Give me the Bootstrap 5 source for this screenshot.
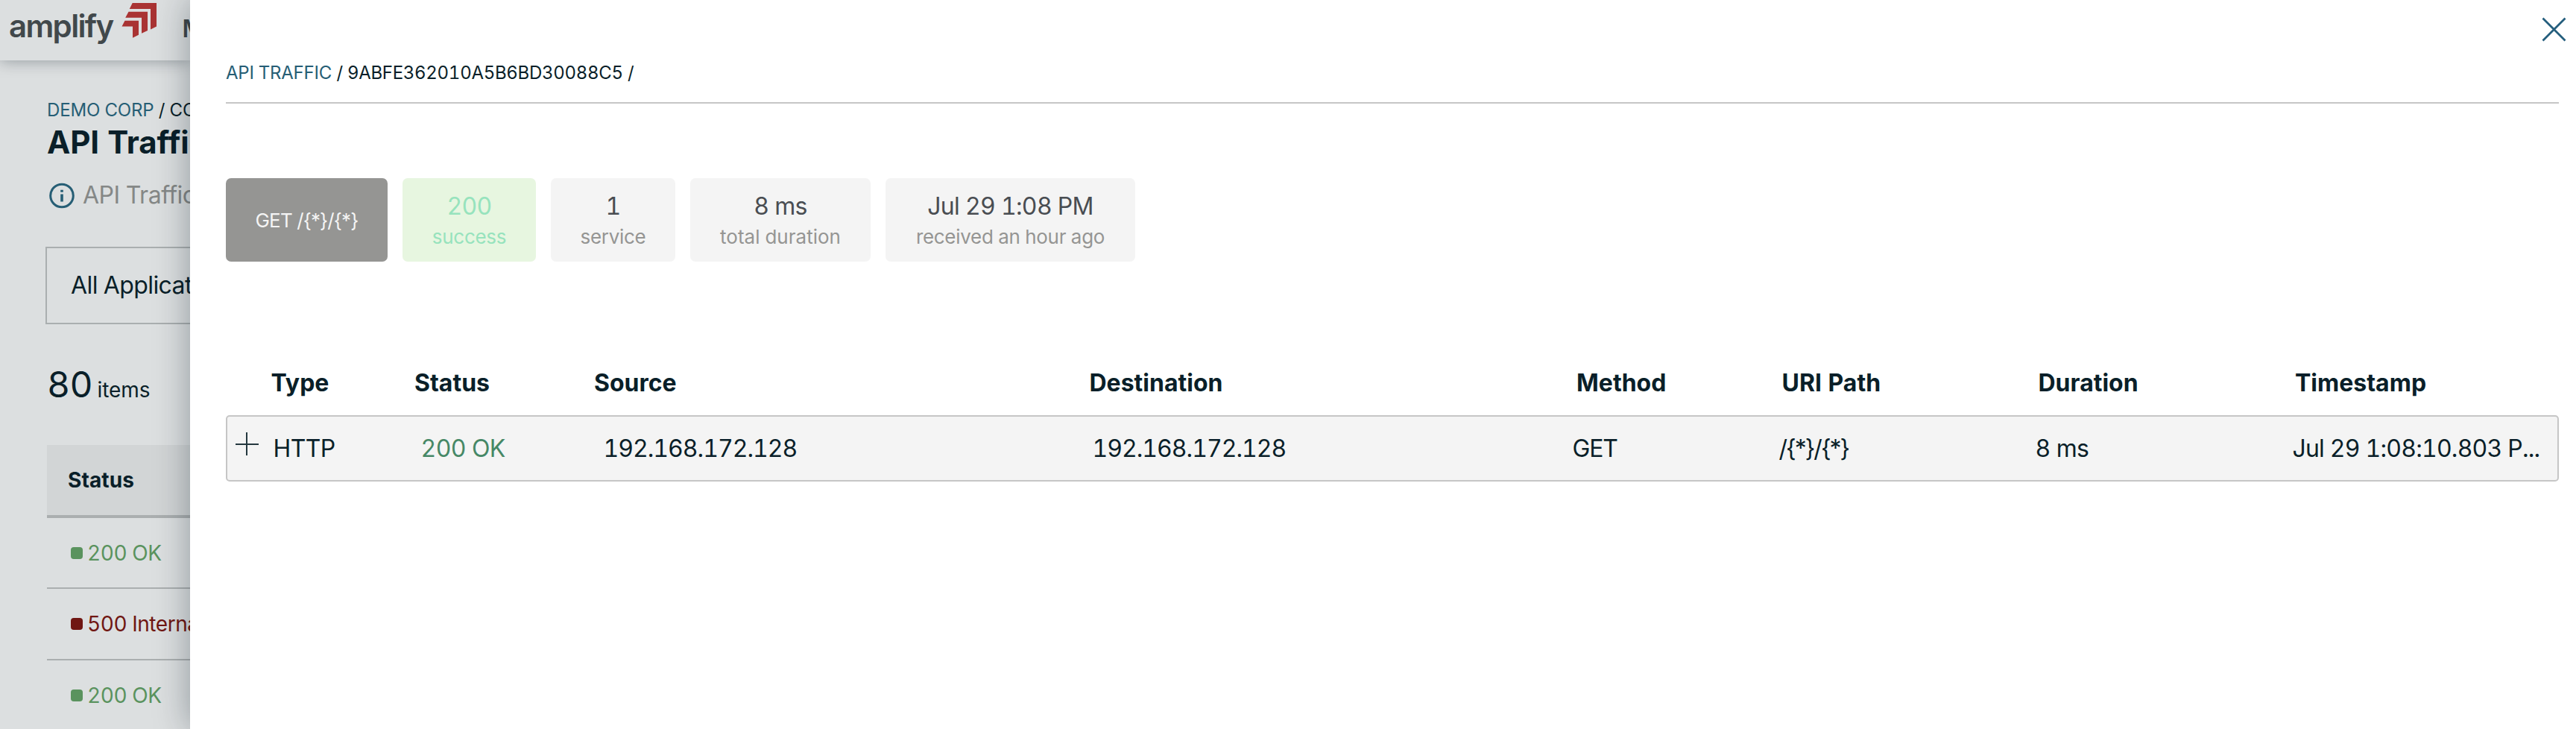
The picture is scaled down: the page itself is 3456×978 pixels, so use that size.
<!DOCTYPE html>
<html lang="en">
<head>
<meta charset="utf-8">
<title>API Traffic</title>
<link href="https://cdn.jsdelivr.net/npm/bootstrap@5.3.0/dist/css/bootstrap.min.css" rel="stylesheet">
<script src="https://cdn.jsdelivr.net/npm/bootstrap@5.3.0/dist/js/bootstrap.bundle.min.js"></script>
<style>
  body { font-family: Inter, "Liberation Sans", sans-serif; color: #0a1f29; background: #fff; font-feature-settings: "tnum"; }
  .app { height: 978px; }
  .under { width: 255px; background: #dcdfe0; white-space: nowrap; }
  .topbar { height: 81px; box-shadow: 0 0 20px rgba(0,20,30,.36); color: #41484b; }
  .brand { font-size: 42px; font-weight: 600; letter-spacing: -1.66px; line-height: 60px; margin: 5px 0 0 12px; }
  .brand-mark { margin: 3px 0 0 11px; }
  .top-item { font-size: 32px; font-weight: 600; line-height: 60px; margin: 9px 0 0 34px; }
  .under-main { padding-left: 61px; width: 700px; }
  .crumb { font-size: 24px; line-height: 36px; }
  .crumb a { color: #265e75; text-decoration: none; }
  .under .crumb { margin-top: 49px; padding-left: 2px; letter-spacing: -.16px; }
  .under h1 { font-size: 42px; font-weight: 700; line-height: 50px; letter-spacing: -.1px; margin: 0 0 0 2px; }
  .hint { color: #858887; font-size: 32px; line-height: 40px; letter-spacing: -.49px; margin-top: 26px; padding-left: 5px; gap: 9px; }
  .app-select { height: 104px; width: 600px; border: 2px solid #aaafb0; margin-top: 49px; padding-left: 32px; font-size: 32px; letter-spacing: -.6px; }
  .count { font-size: 28px; line-height: 60px; height: 60px; letter-spacing: -.1px; word-spacing: -.7px; margin-top: 51px; padding-left: 2px; }
  .count span { font-size: 48px; letter-spacing: -.7px; }
  .grid-list { margin-left: 2px; margin-top: 51px; font-size: 28px; }
  .grid-head { height: 98px; background: #d2d5d6; border-bottom: 4px solid #abafb0; padding-left: 28px; font-weight: 700; letter-spacing: .1px; }
  .grid-line { height: 96px; border-bottom: 2px solid #abafb0; padding-left: 32px; letter-spacing: -.45px; }
  .grid-line:nth-child(2) { height: 95px; }
  .grid-line i { width: 16px; height: 16px; border-radius: 4px; background: currentColor; margin-right: 6px; }
  .ok { color: #5a935e; }
  .err { color: #701713; }
  .drawer { box-shadow: 0 0 44px rgba(0,20,30,.36); padding: 80px 23px 0 48px; z-index: 2; min-width: 0; }
  .drawer .crumb { height: 59px; border-bottom: 2px solid #c6c6c6; }
  .drawer .crumb a { letter-spacing: -.24px; }
  .drawer .crumb span { letter-spacing: -.3px; }
  .close-x { position: absolute; top: 22px; right: 11px; }
  .chips { margin-top: 100px; gap: 20px; }
  .chip { height: 112px; border-radius: 7px; background: #f4f4f4; color: #959593; font-size: 26px; line-height: 41px; padding: 18px 0 13px; text-align: center; letter-spacing: -.3px; }
  .chip b { display: block; font-weight: 400; font-size: 32px; line-height: 40px; color: #494d52; letter-spacing: -.7px; }
  .chip-route { background: #959593; color: #f4f4f4; letter-spacing: -.87px; font-feature-settings: normal; }
  .chip-ok, .chip-ok b { background: #e7f6e0; color: #97e3bd; }
  .chip-total { letter-spacing: 0; }
  .spans { display: grid; font-size: 32px; align-items: center; white-space: nowrap; }
  .span-head { height: 60px; margin-top: 133px; font-weight: 700; grid-template-columns: 60.5px 192.5px 241px 664.5px 653.5px 275.5px 344px 344.5px 1fr; }
  .span-row { height: 89px; margin-top: 13px; border: 2px solid #c6c6c6; border-radius: 5px; background: #f4f4f4; letter-spacing: -.6px; grid-template-columns: 61.5px 198px 245px 656px 644px 277px 344px 345px 1fr; }
  .span-row .addr { letter-spacing: -1px; }
  .span-row .verb { letter-spacing: -1.2px; }
  .span-row .uri { letter-spacing: -2px; font-feature-settings: normal; }
  .span-row .when { letter-spacing: -.8px; }
  .span-status { color: #468866; }
  .expand { margin: -12px 0 0 11px; }
</style>
</head>
<body>
<div class="app d-flex overflow-hidden">
  <aside class="under flex-shrink-0 overflow-hidden">
    <header class="topbar d-flex align-items-start">
      <div class="brand">amplify</div>
      <svg class="brand-mark flex-shrink-0" width="48" height="48" viewBox="0 0 48 48" fill="#a93333"><path d="M14.700 1H47v31.500l-8 4V9H10.700zM9.500 12.700H35V38l-8 3.700V20.700H5.200zM4.500 24.700H23v19l-8 4V32.500H.5z"/></svg>
      <div class="top-item">Management</div>
    </header>
    <div class="under-main">
      <div class="crumb"><a href="#">DEMO CORP</a> / CORE</div>
      <h1>API Traffic</h1>
      <div class="hint d-flex align-items-center"><svg class="flex-shrink-0" width="36" height="36" viewBox="0 0 36 36" fill="none" stroke="#265e75" stroke-width="3"><circle cx="17" cy="18.500" r="15.300"/><path d="M17 16.500v10M17 10.700v3" stroke-width="3.600"/></svg><span>API Traffic</span></div>
      <div class="app-select d-flex align-items-center">All Applications</div>
      <div class="count"><span>80</span> items</div>
      <div class="grid-list">
        <div class="grid-head d-flex align-items-center">Status</div>
        <div class="grid-line d-flex align-items-center ok"><i></i>200 OK</div>
        <div class="grid-line d-flex align-items-center err"><i></i>500 Internal</div>
        <div class="grid-line d-flex align-items-center ok"><i></i>200 OK</div>
      </div>
    </div>
  </aside>
  <main class="drawer flex-grow-1 position-relative bg-white">
    <svg class="close-x" width="36" height="36" viewBox="0 0 36 36" stroke="#245e7d" stroke-width="2.800"><path d="M2.500 2.500l30 30M32.500 2.500l-30 30"/></svg>
    <nav class="crumb"><a href="#">API TRAFFIC</a> <span>/ 9ABFE362010A5B6BD30088C5 /</span></nav>
    <div class="chips d-flex">
      <div class="chip chip-route d-flex align-items-center justify-content-center p-0" style="width:217px">GET /{*}/{*}</div>
      <div class="chip chip-ok" style="width:179px"><b>200</b>success</div>
      <div class="chip" style="width:167px"><b>1</b>service</div>
      <div class="chip chip-total" style="width:242px"><b>8 ms</b>total duration</div>
      <div class="chip" style="width:335px"><b>Jul 29 1:08 PM</b>received an hour ago</div>
    </div>
    <div class="spans span-head">
      <span></span><span>Type</span><span>Status</span><span>Source</span><span>Destination</span><span>Method</span><span>URI Path</span><span>Duration</span><span>Timestamp</span>
    </div>
    <div class="spans span-row">
      <svg class="expand" width="32" height="32" viewBox="0 0 32 32" stroke="#24383f" stroke-width="2"><path d="M0 16h31M15 0v31"/></svg><span>HTTP</span><span class="span-status">200 OK</span><span class="addr">192.168.172.128</span><span class="addr">192.168.172.128</span><span class="verb">GET</span><span class="uri">/{*}/{*}</span><span>8 ms</span><span class="when">Jul 29 1:08:10.803 P...</span>
    </div>
  </main>
</div>
</body>
</html>
